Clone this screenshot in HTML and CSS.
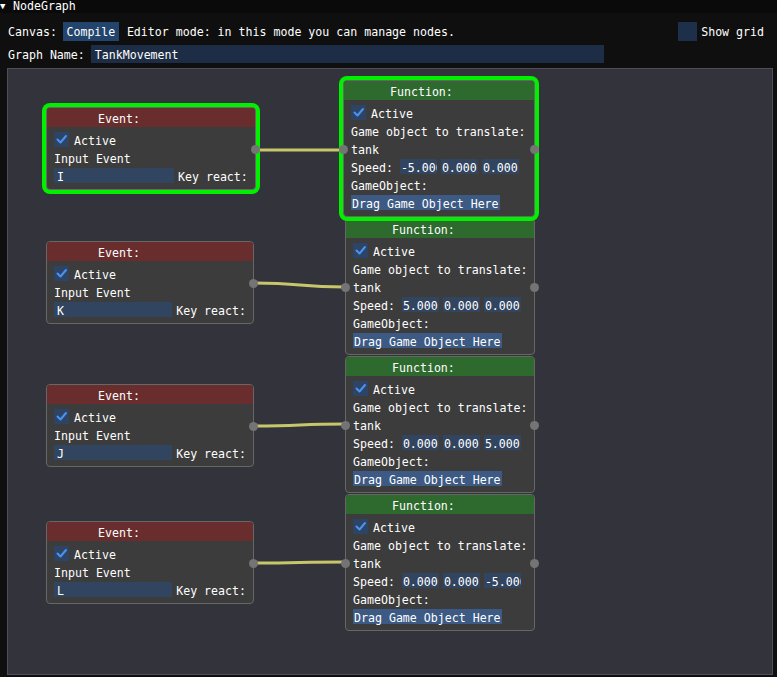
FILE: index.html
```html
<!DOCTYPE html>
<html>
<head>
<meta charset="utf-8">
<link rel="stylesheet" href="styles.css">
</head>
<body>
<div class="window">
  <div class="titlebar"><span class="arrow">▼</span><span>NodeGraph</span></div>
  <div class="toolbar">
    <span class="label">Canvas:</span>
    <span class="button">Compile</span>
    <span class="mode">Editor mode: in this mode you can manage nodes.</span>
    <span class="spacer"></span>
    <span class="gridbox"></span>
    <span class="gridlabel">Show grid</span>
  </div>
  <div class="namerow">
    <span class="label">Graph Name:</span>
    <span class="nameinput">TankMovement</span>
  </div>
  <div class="canvas">
    <svg class="wires" width="766" height="607" viewBox="0 0 766 607">
      <path d="M248 81 C 290 81, 294 81, 336 81" />
      <path d="M246 214 C 296 214, 288 218, 337 218" />
      <path d="M246 357 C 296 357, 288 355, 337 355" />
      <path d="M246 494 C 296 494, 288 493, 337 493" />
    </svg>

    <!-- Event nodes -->
    <div class="node event selected n-e1">
      <div class="head">Event:</div>
      <div class="body">
        <div class="row"><span class="check"><svg width="15" height="15" viewBox="0 0 15 15"><path d="M3.5 7.5 L6.5 10.5 L12 4" /></svg></span><span>Active</span></div>
        <div class="row">Input Event</div>
        <div class="row"><span class="field keyfield">I</span><span>Key react:</span></div>
      </div>
      <span class="pin out ev"></span>
    </div>
    <div class="node event n-e2">
      <div class="head">Event:</div>
      <div class="body">
        <div class="row"><span class="check"><svg width="15" height="15" viewBox="0 0 15 15"><path d="M3.5 7.5 L6.5 10.5 L12 4" /></svg></span><span>Active</span></div>
        <div class="row">Input Event</div>
        <div class="row"><span class="field keyfield">K</span><span>Key react:</span></div>
      </div>
      <span class="pin out ev"></span>
    </div>
    <div class="node event n-e3">
      <div class="head">Event:</div>
      <div class="body">
        <div class="row"><span class="check"><svg width="15" height="15" viewBox="0 0 15 15"><path d="M3.5 7.5 L6.5 10.5 L12 4" /></svg></span><span>Active</span></div>
        <div class="row">Input Event</div>
        <div class="row"><span class="field keyfield">J</span><span>Key react:</span></div>
      </div>
      <span class="pin out ev"></span>
    </div>
    <div class="node event n-e4">
      <div class="head">Event:</div>
      <div class="body">
        <div class="row"><span class="check"><svg width="15" height="15" viewBox="0 0 15 15"><path d="M3.5 7.5 L6.5 10.5 L12 4" /></svg></span><span>Active</span></div>
        <div class="row">Input Event</div>
        <div class="row"><span class="field keyfield">L</span><span>Key react:</span></div>
      </div>
      <span class="pin out ev"></span>
    </div>

    <!-- Function nodes -->
    <div class="node func n-f2">
      <div class="head">Function:</div>
      <div class="body">
        <div class="row"><span class="check"><svg width="15" height="15" viewBox="0 0 15 15"><path d="M3.5 7.5 L6.5 10.5 L12 4" /></svg></span><span>Active</span></div>
        <div class="row">Game object to translate:</div>
        <div class="row">tank</div>
        <div class="row"><span class="speedlabel">Speed:</span><span class="field num">5.000</span><span class="field num">0.000</span><span class="field num">0.000</span></div>
        <div class="row">GameObject:</div>
        <div class="row"><span class="drag">Drag Game Object Here</span></div>
      </div>
      <span class="pin in fn"></span>
      <span class="pin out fn"></span>
    </div>
    <div class="node func n-f3">
      <div class="head">Function:</div>
      <div class="body">
        <div class="row"><span class="check"><svg width="15" height="15" viewBox="0 0 15 15"><path d="M3.5 7.5 L6.5 10.5 L12 4" /></svg></span><span>Active</span></div>
        <div class="row">Game object to translate:</div>
        <div class="row">tank</div>
        <div class="row"><span class="speedlabel">Speed:</span><span class="field num">0.000</span><span class="field num">0.000</span><span class="field num">5.000</span></div>
        <div class="row">GameObject:</div>
        <div class="row"><span class="drag">Drag Game Object Here</span></div>
      </div>
      <span class="pin in fn"></span>
      <span class="pin out fn"></span>
    </div>
    <div class="node func n-f4">
      <div class="head">Function:</div>
      <div class="body">
        <div class="row"><span class="check"><svg width="15" height="15" viewBox="0 0 15 15"><path d="M3.5 7.5 L6.5 10.5 L12 4" /></svg></span><span>Active</span></div>
        <div class="row">Game object to translate:</div>
        <div class="row">tank</div>
        <div class="row"><span class="speedlabel">Speed:</span><span class="field num">0.000</span><span class="field num">0.000</span><span class="field num">-5.000</span></div>
        <div class="row">GameObject:</div>
        <div class="row"><span class="drag">Drag Game Object Here</span></div>
      </div>
      <span class="pin in fn"></span>
      <span class="pin out fn"></span>
    </div>
    <div class="node func selected n-f1">
      <div class="head">Function:</div>
      <div class="body">
        <div class="row"><span class="check"><svg width="15" height="15" viewBox="0 0 15 15"><path d="M3.5 7.5 L6.5 10.5 L12 4" /></svg></span><span>Active</span></div>
        <div class="row">Game object to translate:</div>
        <div class="row">tank</div>
        <div class="row"><span class="speedlabel">Speed:</span><span class="field num">-5.000</span><span class="field num">0.000</span><span class="field num">0.000</span></div>
        <div class="row">GameObject:</div>
        <div class="row"><span class="drag">Drag Game Object Here</span></div>
      </div>
      <span class="pin in fn"></span>
      <span class="pin out fn"></span>
    </div>
  </div>
</div>
</body>
</html>
```

FILE: styles.css
```css
* { box-sizing: border-box; }
html, body {
  margin: 0;
  padding: 0;
  background: #0f0f0f;
  width: 777px;
  height: 677px;
  overflow: hidden;
}
body {
  font-family: "DejaVu Sans Mono", "Liberation Mono", monospace;
  font-size: 11.6px;
  color: #ffffff;
}
.window {
  display: flex;
  flex-direction: column;
}
.titlebar {
  height: 13px;
  background: #0a0a0a;
  display: flex;
  align-items: center;
  gap: 6px;
  line-height: 13px;
}
.arrow {
  font-size: 9px;
  width: 7px;
}
.toolbar {
  margin-top: 9px;
  height: 19px;
  display: flex;
  align-items: flex-start;
  padding-left: 8px;
  line-height: 21px;
}
.label { white-space: pre; }
.button {
  margin-left: 6px;
  height: 19px;
  width: 56px;
  background: #23456d;
  text-align: center;
}
.mode { margin-left: 8px; }
.spacer { flex: 1; }
.gridbox {
  width: 19px;
  height: 19px;
  background: #1d2f49;
}
.gridlabel {
  margin-left: 4px;
  margin-right: 13px;
}
.namerow {
  margin-top: 4px;
  height: 18px;
  display: flex;
  align-items: flex-start;
  padding-left: 8px;
  line-height: 20px;
}
.nameinput {
  margin-left: 6px;
  width: 513px;
  height: 18px;
  background: #1d2d45;
  padding-left: 4px;
}
.canvas {
  position: relative;
  margin-top: 5px;
  margin-left: 7px;
  width: 766px;
  height: 607px;
  background: #32333b;
  border: 1px solid #4f4f5a;
  overflow: hidden;
}
.wires {
  position: absolute;
  left: 0;
  top: 0;
}
.wires path {
  fill: none;
  stroke: #c8c66a;
  stroke-width: 3;
}
.node {
  position: absolute;
  background: #3c3c3c;
  border: 1px solid #676767;
  border-radius: 4px;
}
.node.selected {
  box-shadow: 0 0 0 4px #00f000;
  z-index: 2;
}
.head {
  height: 19px;
  line-height: 22px;
  border-radius: 3px 3px 0 0;
}
.event .head { background: #6a2d2e; padding-left: 51px; }
.func .head { background: #2e6a2e; padding-left: 46px; }
.body {
  padding: 5px 7px 6px 7px;
  display: flex;
  flex-direction: column;
  gap: 3px;
}
.row {
  height: 15px;
  line-height: 18px;
  display: flex;
  align-items: flex-start;
  white-space: pre;
}
.check {
  width: 15px;
  height: 15px;
  background: #2e4466;
  margin-right: 5px;
  display: flex;
}
.check path {
  fill: none;
  stroke: #4a93f0;
  stroke-width: 2;
  stroke-linecap: round;
  stroke-linejoin: round;
}
.field {
  height: 15px;
  background: #324560;
  overflow: hidden;
  white-space: pre;
}
.keyfield {
  width: 120px;
  padding-left: 3px;
  margin-right: 4px;
}
.speedlabel { margin-right: 7px; }
.num {
  width: 37px;
  margin-right: 4px;
  padding-left: 1px;
}
.drag {
  height: 15px;
  background: #3c5a84;
  padding: 0 1px;
}
.pin {
  position: absolute;
  width: 9px;
  height: 9px;
  border-radius: 50%;
  background: #747474;
}
.pin.out { right: -5px; }
.pin.in { left: -5px; }
.pin.ev { top: 37px; }
.pin.fn { top: 64px; }

.n-e1 { left: 38px; top: 38px; width: 210px; }
.n-e2 { left: 38px; top: 172px; width: 208px; }
.n-e3 { left: 38px; top: 315px; width: 208px; }
.n-e4 { left: 38px; top: 452px; width: 208px; }
.n-f1 { left: 335px; top: 11px; width: 192px; }
.n-f2 { left: 337px; top: 149px; width: 190px; }
.n-f3 { left: 337px; top: 287px; width: 190px; }
.n-f4 { left: 337px; top: 425px; width: 190px; }
```
